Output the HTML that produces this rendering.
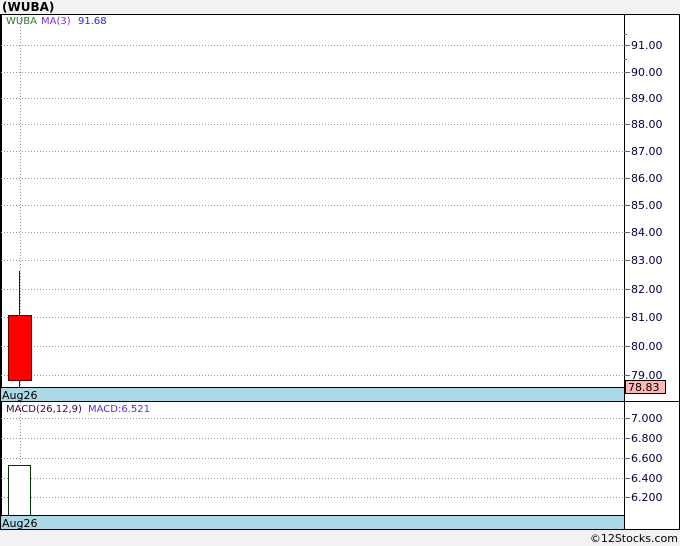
<!DOCTYPE html>
<html><head><style>
body{margin:0;background:#f2f2f2;}
svg{display:block;font-family:"DejaVu Sans","Liberation Sans",sans-serif;}
</style></head><body>
<svg width="680" height="546" xmlns="http://www.w3.org/2000/svg">
<rect x="0" y="0" width="680" height="546" fill="#f2f2f2"/>
<text x="2" y="11" font-size="12" font-weight="bold" fill="#000">(WUBA)</text>
<rect x="0.5" y="14.5" width="679" height="515" fill="#fff" stroke="#000"/>
<line x1="1" y1="14" x2="1" y2="530" stroke="#000" stroke-width="2"/>
<g stroke="#999" stroke-dasharray="1,2" stroke-width="1">
<line x1="1" y1="45.5" x2="624" y2="45.5"/><line x1="1" y1="72.5" x2="624" y2="72.5"/>
<line x1="1" y1="98.5" x2="624" y2="98.5"/><line x1="1" y1="124.5" x2="624" y2="124.5"/>
<line x1="1" y1="151.5" x2="624" y2="151.5"/><line x1="1" y1="178.5" x2="624" y2="178.5"/>
<line x1="1" y1="205.5" x2="624" y2="205.5"/><line x1="1" y1="232.5" x2="624" y2="232.5"/>
<line x1="1" y1="260.5" x2="624" y2="260.5"/><line x1="1" y1="289.5" x2="624" y2="289.5"/>
<line x1="1" y1="317.5" x2="624" y2="317.5"/><line x1="1" y1="346.5" x2="624" y2="346.5"/>
<line x1="1" y1="375.5" x2="624" y2="375.5"/>
<line x1="1" y1="418.5" x2="624" y2="418.5"/><line x1="1" y1="438.5" x2="624" y2="438.5"/>
<line x1="1" y1="458.5" x2="624" y2="458.5"/><line x1="1" y1="478.5" x2="624" y2="478.5"/>
<line x1="1" y1="497.5" x2="624" y2="497.5"/>
<line x1="20.5" y1="15" x2="20.5" y2="388"/><line x1="20.5" y1="402" x2="20.5" y2="516"/>
</g>
<line x1="19.5" y1="271" x2="19.5" y2="388" stroke="#600" stroke-width="1"/>
<rect x="8.5" y="315.5" width="23" height="65" fill="#f00" stroke="#600"/>
<rect x="8.5" y="465.5" width="22" height="50" fill="#fff" stroke="#030"/>
<rect x="1" y="388" width="623" height="13" fill="#add8e6"/>
<line x1="0" y1="387.5" x2="624" y2="387.5" stroke="#000"/>
<line x1="0" y1="401.5" x2="680" y2="401.5" stroke="#000"/>
<rect x="1" y="516" width="623" height="13" fill="#add8e6"/>
<line x1="0" y1="515.5" x2="624" y2="515.5" stroke="#000"/>
<line x1="624.5" y1="14" x2="624.5" y2="530" stroke="#000"/>
<g font-size="11" fill="#000">
<text x="2" y="399">Aug26</text><text x="2" y="527">Aug26</text>
</g>
<g font-size="10">
<text x="6" y="24" fill="#2a7a2a">WUBA</text>
<text x="41" y="24" fill="#8a2be2">MA(3)</text>
<text x="78" y="24" fill="#2020ff">91.68</text>
<text x="6" y="412" fill="#400040">MACD(26,12,9)</text>
<text x="88" y="412" fill="#5a2be2">MACD:6.521</text>
</g>
<g stroke="#666">
<line x1="624" y1="45.5" x2="630" y2="45.5"/><line x1="624" y1="72.5" x2="630" y2="72.5"/>
<line x1="624" y1="98.5" x2="630" y2="98.5"/><line x1="624" y1="124.5" x2="630" y2="124.5"/>
<line x1="624" y1="151.5" x2="630" y2="151.5"/><line x1="624" y1="178.5" x2="630" y2="178.5"/>
<line x1="624" y1="205.5" x2="630" y2="205.5"/><line x1="624" y1="232.5" x2="630" y2="232.5"/>
<line x1="624" y1="260.5" x2="630" y2="260.5"/><line x1="624" y1="289.5" x2="630" y2="289.5"/>
<line x1="624" y1="317.5" x2="630" y2="317.5"/><line x1="624" y1="346.5" x2="630" y2="346.5"/>
<line x1="624" y1="375.5" x2="630" y2="375.5"/>
<line x1="624" y1="34.5" x2="627" y2="34.5"/><line x1="624" y1="59.5" x2="627" y2="59.5"/>
<line x1="624" y1="418.5" x2="630" y2="418.5"/><line x1="624" y1="438.5" x2="630" y2="438.5"/>
<line x1="624" y1="458.5" x2="630" y2="458.5"/><line x1="624" y1="478.5" x2="630" y2="478.5"/>
<line x1="624" y1="497.5" x2="630" y2="497.5"/>
</g>
<g font-size="11" fill="#000040">
<text x="631" y="49">91.00</text><text x="631" y="76">90.00</text>
<text x="631" y="102">89.00</text><text x="631" y="128">88.00</text>
<text x="631" y="155">87.00</text><text x="631" y="182">86.00</text>
<text x="631" y="209">85.00</text><text x="631" y="236">84.00</text>
<text x="631" y="264">83.00</text><text x="631" y="293">82.00</text>
<text x="631" y="321">81.00</text><text x="631" y="350">80.00</text>
<text x="631" y="379">79.00</text>
<text x="631" y="422">7.000</text><text x="631" y="442">6.800</text>
<text x="631" y="462">6.600</text><text x="631" y="482">6.400</text>
<text x="631" y="501">6.200</text>
</g>
<rect x="625.5" y="380.5" width="40" height="13" fill="#ffb6b6" stroke="#000"/>
<text x="628" y="391" font-size="11" fill="#000">78.83</text>
<text x="678" y="542" font-size="11" fill="#000" text-anchor="end">©12Stocks.com</text>
</svg>
</body></html>
